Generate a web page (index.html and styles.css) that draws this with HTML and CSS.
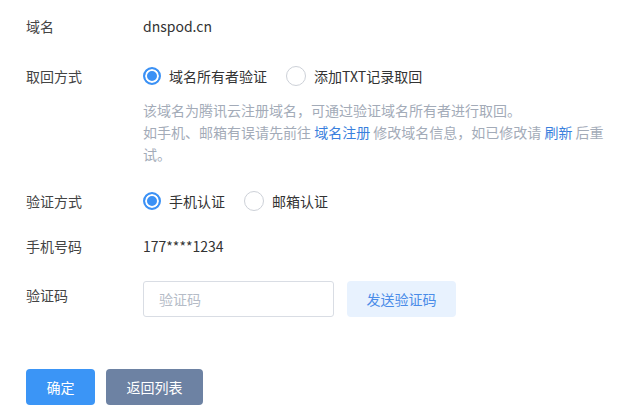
FILE: index.html
```html
<!DOCTYPE html>
<html lang="zh-CN">
<head>
    <meta charset="UTF-8">
    <meta name="viewport" content="width=device-width, initial-scale=1.0">
    <title>域名取回</title>
    <link rel="stylesheet" href="styles.css">
</head>
<body>
    <div class="form">
        <div class="form-row row-domain">
            <div class="form-label">域名</div>
            <div class="form-value">dnspod.cn</div>
        </div>

        <div class="form-row row-method">
            <div class="form-label">取回方式</div>
            <div class="form-value">
                <div class="radio-group">
                    <label class="radio checked"><span class="radio-dot"></span>域名所有者验证</label>
                    <label class="radio"><span class="radio-dot"></span>添加TXT记录取回</label>
                </div>
                <p class="help">该域名为腾讯云注册域名，可通过验证域名所有者进行取回。<br>如手机、邮箱有误请先前往 <a href="#">域名注册</a> 修改域名信息，如已修改请 <a href="#">刷新</a> 后重试。</p>
            </div>
        </div>

        <div class="form-row row-verify">
            <div class="form-label">验证方式</div>
            <div class="form-value">
                <div class="radio-group">
                    <label class="radio checked"><span class="radio-dot"></span>手机认证</label>
                    <label class="radio"><span class="radio-dot"></span>邮箱认证</label>
                </div>
            </div>
        </div>

        <div class="form-row row-phone">
            <div class="form-label">手机号码</div>
            <div class="form-value">177****1234</div>
        </div>

        <div class="form-row row-code">
            <div class="form-label">验证码</div>
            <div class="form-value code-field">
                <input type="text" class="code-input" placeholder="验证码">
                <button class="btn btn-light">发送验证码</button>
            </div>
        </div>

        <div class="actions">
            <button class="btn btn-primary">确定</button>
            <button class="btn btn-gray">返回列表</button>
        </div>
    </div>
</body>
</html>
```

FILE: styles.css
```css
body, html {
    margin: 0;
    background: #fff;
    font-family: "Noto Sans CJK SC", "Noto Sans", sans-serif;
    font-size: 14px;
    color: #333;
}

.form {
    padding: 16px 26px;
}

.form-row {
    display: flex;
    align-items: flex-start;
    line-height: 20px;
}

.form-label {
    width: 117px;
    flex-shrink: 0;
    color: #444;
}

.form-value {
    color: #333;
}

.row-method {
    margin-top: 30px;
}

.row-verify {
    margin-top: 26px;
}

.row-phone {
    margin-top: 25px;
}

.row-code {
    margin-top: 25px;
}

.row-code .form-label {
    padding-top: 4px;
}

/* radio buttons */
.radio-group {
    display: flex;
    gap: 19px;
}

.radio {
    display: flex;
    align-items: center;
    gap: 8px;
    cursor: pointer;
    color: #333;
}

.radio-dot {
    width: 18px;
    height: 18px;
    border: 1px solid #cdd1d8;
    border-radius: 50%;
    box-sizing: content-box;
    background: #fff;
}

.radio.checked .radio-dot {
    width: 14px;
    height: 14px;
    border: 2px solid #3b91f5;
    background: #3b91f5;
    box-shadow: inset 0 0 0 2px #fff;
}

.help {
    width: 470px;
    margin: 13px 0 0;
    font-size: 14px;
    line-height: 22px;
    color: #a3abb8;
}

.help a {
    color: #3a7fdd;
    text-decoration: none;
}

/* verification code */
.code-field {
    display: flex;
    gap: 13px;
}

.code-input {
    width: 191px;
    height: 36px;
    box-sizing: border-box;
    border: 1px solid #d9dde4;
    border-radius: 3px;
    padding: 0 15px;
    font-family: inherit;
    font-size: 14px;
    color: #333;
    outline: none;
}

.code-input::placeholder {
    color: #b5bcc7;
}

.btn {
    height: 36px;
    border: none;
    border-radius: 4px;
    font-family: inherit;
    font-size: 14px;
    cursor: pointer;
    padding: 0 20px;
}

.btn-light {
    width: 109px;
    background: #e8f2fe;
    color: #4a8ce8;
    padding: 0;
}

.actions {
    display: flex;
    gap: 11px;
    margin-top: 52px;
}

.btn-primary {
    width: 69px;
    background: #3b95f6;
    color: #fff;
    padding: 0;
}

.btn-gray {
    width: 97px;
    background: #6d82a3;
    color: #fff;
    padding: 0;
}
```
